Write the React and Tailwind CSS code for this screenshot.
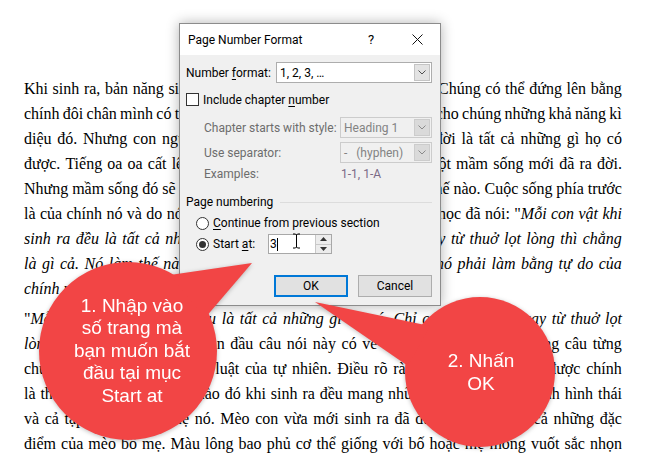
import React from "react";
import clsx from "clsx";

// Document text, one entry per rendered line: [text, italic]
const P1 = [
  [["Khi sinh ra, bản năng sinh tồn của loài vật đã được hình thành. Chúng có thể đứng lên bằng"]],
  [["chính đôi chân mình có thể đi lại được ngay. Tạo hóa đã ban tặng cho chúng những khả năng kì"]],
  [["diệu đó. Nhưng con người thì khác, tiếng khóc lúc mới chào đời là tất cả những gì họ có"]],
  [["được. Tiếng oa oa cất lên báo hiệu cho cả gia đình biết rằng một mầm sống mới đã ra đời."]],
  [["Nhưng mầm sống đó sẽ lớn lên ra sao không ai biết được nó sẽ thế nào. Cuộc sống phía trước"]],
  [["là của chính nó và do nó tự mình quyết định. Như một nhà triết học đã nói: \""], ["Mỗi con vật khi", true]],
  [["sinh ra đều là tất cả những gì nó có. Chỉ có con người là ngay từ thuở lọt lòng thì chẳng", true]],
  [["là gì cả. Nó làm thế nào, nó sẽ trở thành người như thế nào, nó phải làm bằng tự do của", true]],
];

const P2 = [
  [["\""], ["Mỗi con vật khi sinh ra đều là tất cả những gì nó có. Chỉ có con người ngay từ thuở lọt", true]],
  [["lòng thì chẳng là gì cả", true], ["\". Phần đầu câu nói này có vẻ hơi khó hiểu nhưng những câu từng"]],
  [["chữ ấy đều nói lên một quy luật của tự nhiên. Điều rõ ràng mà chúng ta thấy được chính"]],
  [["là thế, bất cứ một loài vật nào đó khi sinh ra đều mang những đặc trưng của mình hình thái"]],
  [["và cả tập tính của bố mẹ nó. Mèo con vừa mới sinh ra đã được thừa hưởng cả những đặc"]],
  [["điểm của mèo bố mẹ. Màu lông bao phủ cơ thể giống với bố hoặc mẹ móng vuốt sắc nhọn"]],
];

function toWords(segs) {
  const words = [];
  let glue = false;
  segs.forEach(([text, it]) => {
    text.split(" ").forEach((p, i) => {
      if (i > 0) glue = false;
      if (!p) return;
      if (glue && words.length) words[words.length - 1].push([p, it]);
      else words.push([[p, it]]);
      glue = true;
    });
  });
  return words;
}

const DocLine = ({ segs, last }) => (
  <div className={clsx("flex h-[25px] items-center", last ? "gap-[4px]" : "justify-between")}>
    {toWords(segs).map((w, i) => (
      <span key={i} className="whitespace-nowrap">
        {w.map(([p, it], j) => (it ? <i key={j}>{p}</i> : <span key={j}>{p}</span>))}
      </span>
    ))}
  </div>
);

const Chevron = ({ color = "#606060" }) => (
  <svg width="8" height="5" viewBox="0 0 8 5">
    <path d="M0.5 0.5 L4 4 L7.5 0.5" fill="none" stroke={color} strokeWidth="1" />
  </svg>
);

const Combo = ({ value, disabled, className }) => (
  <div
    className={clsx(
      "flex h-[21px] items-stretch border",
      disabled ? "border-[#cccccc] bg-[#f0f0f0] text-[#838383]" : "border-[#adadad] bg-white text-black",
      className
    )}
  >
    <div className="flex flex-1 items-center whitespace-pre pl-[3px]">{value}</div>
    <div
      className={clsx(
        "m-[1px] flex w-[16px] items-center justify-center border",
        disabled ? "border-[#cccccc] bg-[#dadada]" : "border-[#c4c4c4] bg-[#e3e3e3]"
      )}
    >
      <Chevron color={disabled ? "#8a8a8a" : "#505050"} />
    </div>
  </div>
);

const Radio = ({ checked }) => (
  <span className="flex h-[13px] w-[13px] items-center justify-center rounded-full border border-[#333] bg-white">
    {checked && <span className="h-[7px] w-[7px] rounded-full bg-[#333]" />}
  </span>
);

const Acc = ({ children }) => <u className="underline-offset-[2px]">{children}</u>;

function Dialog() {
  return (
    <div className="absolute left-[179px] top-[23px] flex h-[283px] w-[262px] flex-col border border-[#8c8c8c] bg-[#f0f0f0] font-['Roboto',sans-serif] text-[12px] leading-none text-black shadow-[0_0_12px_rgba(0,0,0,0.3)]">
      {/* Title bar */}
      <div className="flex h-[31px] items-center bg-white pl-[8px]">
        <span className="flex-1">Page Number Format</span>
        <span className="mr-[8px] w-[30px] text-center text-[13px]">?</span>
        <span className="flex w-[46px] justify-center">
          <svg width="11" height="11" viewBox="0 0 11 11">
            <path d="M0.5 0.5 L10.5 10.5 M10.5 0.5 L0.5 10.5" stroke="#111" strokeWidth="1" />
          </svg>
        </span>
      </div>

      <div className="flex flex-1 flex-col pl-[6px] pr-[8px]">
        <div className="mt-[7px] flex h-[21px] items-center">
          <span className="w-[90px]">
            Number <Acc>f</Acc>ormat:
          </span>
          <Combo value="1, 2, 3, …" className="flex-1" />
        </div>

        <div className="mt-[10px] flex h-[13px] items-center gap-[4px]">
          <span className="h-[13px] w-[13px] border border-[#333] bg-white" />
          <span>
            Include chapter <Acc>n</Acc>umber
          </span>
        </div>

        <div className="mt-[11px] flex h-[21px] items-center">
          <span className="w-[154px] pl-[18px] text-[#6d6d6d]">Chapter starts with style:</span>
          <Combo value="Heading 1" disabled className="w-[92px]" />
        </div>

        <div className="mt-[4px] flex h-[21px] items-center">
          <span className="w-[154px] pl-[18px] text-[#6d6d6d]">Use separator:</span>
          <Combo value={"-   (hyphen)"} disabled className="w-[92px]" />
        </div>

        <div className="mt-[4px] flex h-[14px] items-center">
          <span className="w-[155px] pl-[18px] text-[#6d6d6d]">Examples:</span>
          <span className="text-[#7a6a86]">1-1, 1-A</span>
        </div>

        <div className="mt-[14px] flex h-[14px] items-center">
          <span>Page numbering</span>
          <span className="ml-[7px] flex-1 border-t border-[#dcdcdc]" />
        </div>

        <div className="mt-[7px] flex h-[14px] items-center gap-[4px] pl-[10px]">
          <Radio />
          <span>
            <Acc>C</Acc>ontinue from previous section
          </span>
        </div>

        <div className="mt-[4px] flex h-[20px] items-center gap-[4px] pl-[10px]">
          <Radio checked />
          <span className="w-[51px]">
            Start <Acc>a</Acc>t:
          </span>
          <div className="relative flex h-[20px] w-[64px] border border-[#a8a8a8] bg-white">
            <div className="flex flex-1 items-center pl-[1px]">
              <span>3</span>
              <span className="h-[13px] w-[1px] bg-black" />
            </div>
            <div className="flex w-[16px] flex-col border-l border-[#c8c8c8]">
              <div className="flex flex-1 items-center justify-center border-b border-[#c8c8c8] bg-[#ececec]">
                <svg width="7" height="4" viewBox="0 0 7 4">
                  <path d="M0 4 L3.5 0 L7 4 Z" fill="#333" />
                </svg>
              </div>
              <div className="flex flex-1 items-center justify-center bg-[#ececec]">
                <svg width="7" height="4" viewBox="0 0 7 4">
                  <path d="M0 0 L3.5 4 L7 0 Z" fill="#333" />
                </svg>
              </div>
            </div>
            {/* I-beam mouse cursor */}
            <svg className="absolute left-[23px] top-[-2px]" width="9" height="16" viewBox="0 0 9 16">
              <path d="M1 1 H3.5 L4.5 2 L5.5 1 H8 M4.5 2 V14 M1 15 H3.5 L4.5 14 L5.5 15 H8" fill="none" stroke="#000" strokeWidth="1" />
            </svg>
          </div>
        </div>

        <div className="mt-[21px] flex justify-end gap-[10px]">
          <button type="button" className="flex h-[22px] w-[74px] items-center justify-center border-2 border-[#0078d7] bg-[#e1e1e1]">
            OK
          </button>
          <button type="button" className="flex h-[22px] w-[74px] items-center justify-center border border-[#adadad] bg-[#e1e1e1]">
            Cancel
          </button>
        </div>
      </div>
    </div>
  );
}

const RED = "#f24545";

function CalloutOne() {
  return (
    <div className="absolute left-[39px] top-[258px] h-[186px] w-[216px] drop-shadow-[0_1px_2px_rgba(0,0,0,0.25)]">
      <svg className="absolute left-0 top-0" width="216" height="186" viewBox="0 0 216 186">
        <circle cx="89" cy="93" r="89" fill={RED} />
        <path d="M213 5 L131 17 L166 60 Z" fill={RED} />
      </svg>
      <div className="absolute left-0 top-0 flex h-[186px] w-[186px] flex-col items-center justify-center font-['Liberation_Sans',Arial,sans-serif] text-[19px] leading-[22.5px] text-white">
        <span>1. Nhập vào</span>
        <span>số trang mà</span>
        <span>bạn muốn bắt</span>
        <span>đầu tại mục</span>
        <span>Start at</span>
      </div>
    </div>
  );
}

function CalloutTwo() {
  return (
    <div className="absolute left-[312px] top-[296px] h-[153px] w-[245px] drop-shadow-[0_1px_2px_rgba(0,0,0,0.25)]">
      <svg className="absolute left-0 top-0" width="245" height="153" viewBox="0 0 245 153">
        <circle cx="168" cy="76" r="75" fill={RED} />
        <path d="M3 6 L118 30 L96 70 Z" fill={RED} />
      </svg>
      <div className="absolute left-[94px] top-0 flex h-[153px] w-[150px] flex-col items-center justify-center font-['Liberation_Sans',Arial,sans-serif] text-[19px] leading-[22.5px] text-white">
        <span>2. Nhấn</span>
        <span>OK</span>
      </div>
    </div>
  );
}

export default function App() {
  return (
    <div className="relative h-[456px] w-[666px] overflow-hidden bg-white">
      <div className="w-[622px] pl-[24px] pt-[76px] font-['Liberation_Serif','Times_New_Roman',serif] text-[16px] text-black">
        <div>
          {P1.map((segs, i) => (
            <DocLine key={i} segs={segs} />
          ))}
          <DocLine segs={[["chính mình", true], ["\"."]]} last />
        </div>
        <div className="mt-[5px]">
          {P2.map((segs, i) => (
            <DocLine key={i} segs={segs} />
          ))}
        </div>
      </div>

      <Dialog />
      <CalloutOne />
      <CalloutTwo />
    </div>
  );
}
